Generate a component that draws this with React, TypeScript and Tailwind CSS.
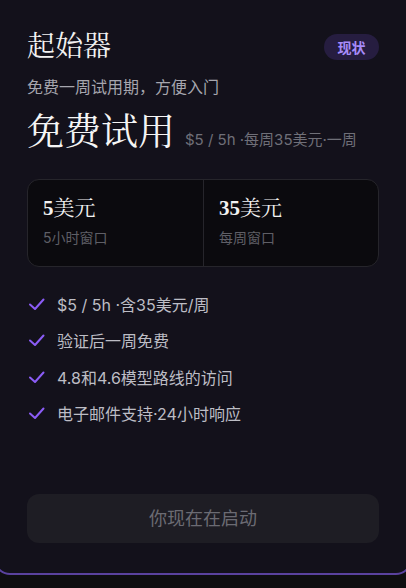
import React from 'react';

/* ------------------------------------------------------------------ */
/*  Data                                                               */
/* ------------------------------------------------------------------ */

const STATS = [
  { value: '5', unit: '美元', label: '5小时窗口' },
  { value: '35', unit: '美元', label: '每周窗口' },
];

const FEATURES = [
  '$5 / 5h ·含35美元/周',
  '验证后一周免费',
  '4.8和4.6模型路线的访问',
  '电子邮件支持·24小时响应',
];

const SANS = "font-['Inter','Noto_Sans_CJK_SC',sans-serif]";
const SERIF = "font-['Liberation_Serif','Noto_Serif_CJK_SC',serif]";

function CheckMark() {
  return (
    <svg width="18" height="18" viewBox="0 0 18 18" fill="none" className="shrink-0">
      <path
        d="M3 8.5 L8 13 L16.5 3.5"
        stroke="#8b5cf6"
        strokeWidth="2"
        strokeLinecap="round"
        strokeLinejoin="round"
      />
    </svg>
  );
}

/* ------------------------------------------------------------------ */
/*  Component                                                          */
/* ------------------------------------------------------------------ */

export default function App() {
  return (
    <div className={`h-[588px] w-[406px] overflow-hidden bg-[#0e0e10] ${SANS}`}>
      <div className="-mx-[6px] -mt-[20px] flex h-[595px] flex-col rounded-2xl border-2 border-[#5a429e] bg-[#13111b] px-[31px] pt-[48px]">
        {/* Header */}
        <div className="flex items-start justify-between">
          <h2 className={`${SERIF} text-[28px] leading-[34px] text-[#f2f2f2]`}>起始器</h2>
          <span className="mt-[4px] flex h-[26px] items-center rounded-full bg-[#261d40] px-[13.5px] text-[14px] font-bold text-[#a78bfa]">
            现状
          </span>
        </div>

        <p className="mt-[11px] text-[16px] leading-[24px] text-[#a6a6ae]">免费一周试用期，方便入门</p>

        {/* Price */}
        <div className="mt-[12px] flex items-baseline gap-[10px]">
          <span className={`${SERIF} text-[37px] leading-[44px] text-[#f5f5f5]`}>免费试用</span>
          <span className="text-[15px] text-[#6f6f78]">$5 / 5h ·每周35美元·一周</span>
        </div>

        {/* Stats */}
        <div className="mt-[23.5px] grid grid-cols-2 rounded-xl border border-[#26252b] bg-[#0b0a0e]">
          {STATS.map((s, i) => (
            <div
              key={s.label}
              className={`px-[15px] pt-[14px] pb-[18px] ${i === 1 ? 'border-l border-[#26252b]' : ''}`}
            >
              <div className={`${SERIF} text-[21px] leading-[28px] text-[#f2f2f2]`}>
                <span className="font-bold">{s.value}</span>
                {s.unit}
              </div>
              <div className="mt-[6px] text-[14px] leading-[20px] text-[#5f5f66]">{s.label}</div>
            </div>
          ))}
        </div>

        {/* Features */}
        <ul className="mt-[26px] flex flex-col gap-[12.5px]">
          {FEATURES.map((f) => (
            <li key={f} className="flex items-center gap-[12px] text-[16px] leading-[24px] text-[#bdbdc5]">
              <CheckMark />
              <span>{f}</span>
            </li>
          ))}
        </ul>

        {/* CTA */}
        <button
          type="button"
          disabled
          className="mt-auto mb-[30px] flex h-[49px] w-full items-center justify-center rounded-xl bg-[#1e1d24] text-[18px] text-[#6b6b73]"
        >
          你现在在启动
        </button>
      </div>
    </div>
  );
}
